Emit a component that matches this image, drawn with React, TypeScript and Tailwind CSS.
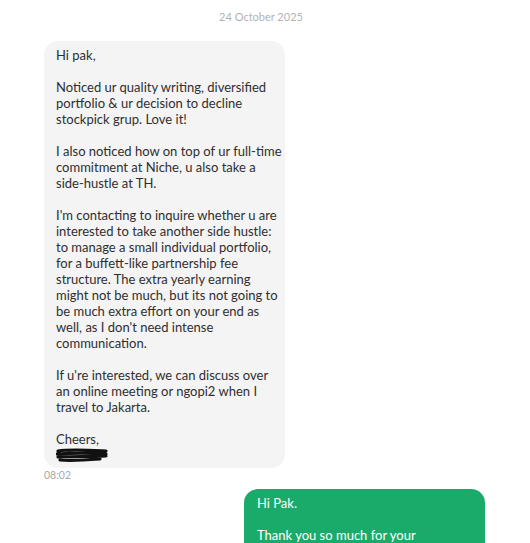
const font = { fontFamily: "Lato, 'Noto Sans', sans-serif" };

// lines kept as in the chat bubble, so wrapping matches
const incoming = [
  ["Hi pak,"],
  ["Noticed ur quality writing, diversified", "portfolio & ur decision to decline", "stockpick grup. Love it!"],
  ["I also noticed how on top of ur full-time", "commitment at Niche, u also take a", "side-hustle at TH."],
  [
    "I'm contacting to inquire whether u are",
    "interested to take another side hustle:",
    "to manage a small individual portfolio,",
    "for a buffett-like partnership fee",
    "structure. The extra yearly earning",
    "might not be much, but its not going to",
    "be much extra effort on your end as",
    "well, as I don't need intense",
    "communication.",
  ],
  ["If u're interested, we can discuss over", "an online meeting or ngopi2 when I", "travel to Jakarta."],
];

const Redacted = () => (
  <svg width="52" height="16" viewBox="0 0 52 16" className="block">
    <path
      d="M2 4 C14 2, 30 3, 50 4 M1 7 C16 6, 34 6, 50 7 M2 10 C18 9, 34 10, 50 9 M4 13 C16 14, 30 13, 44 12"
      stroke="#111"
      strokeWidth="3.2"
      fill="none"
      strokeLinecap="round"
    />
  </svg>
);

export default function App() {
  return (
    <div className="w-[530px] h-[543px] overflow-hidden bg-white" style={font}>
      <div className="pt-[10px] pr-[8px] text-center text-[11px] leading-[14px] text-[#b3b3b3]">
        24 October 2025
      </div>

      <div className="pl-[44px] mt-[17px]">
        <div className="w-[241px] rounded-[14px] bg-[#f4f4f4] pl-[12px] pr-[6px] pt-[6px] pb-[5px] text-[13px] leading-[16px] text-[#2f2f2f] whitespace-nowrap">
          {incoming.map((p, i) => (
            <p key={i} className="mb-[16px]">
              {p.map((l, j) => (
                <span key={j} className="block">
                  {l}
                </span>
              ))}
            </p>
          ))}
          <p>Cheers,</p>
          <Redacted />
        </div>
        <div className="text-[10.5px] leading-[14px] text-[#a8a8a8]">08:02</div>
      </div>

      <div className="flex justify-end pr-[45px] mt-[7px]">
        <div className="w-[241px] rounded-t-[14px] bg-[#1aab6b] pl-[13px] pr-[10px] pt-[6px] pb-[8px] text-[13px] leading-[16px] text-white whitespace-nowrap">
          <p className="mb-[16px]">Hi Pak.</p>
          <p>Thank you so much for your</p>
        </div>
      </div>
    </div>
  );
}
